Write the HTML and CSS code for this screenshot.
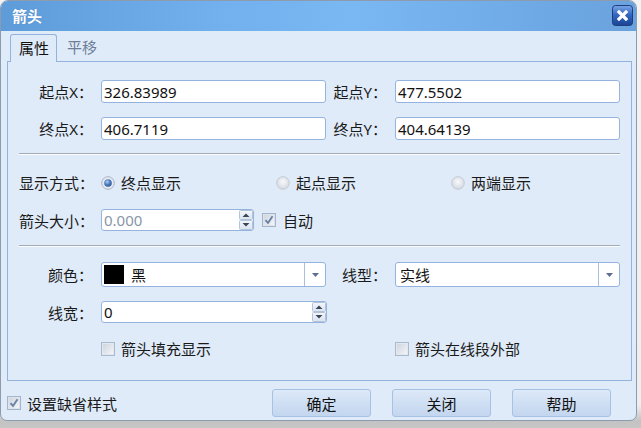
FILE: index.html
```html
<!DOCTYPE html>
<html>
<head>
<meta charset="utf-8">
<title>箭头</title>
<link rel="stylesheet" href="styles.css">
</head>
<body>
<svg class="defs" width="0" height="0">
  <defs>
    <linearGradient id="closeg" x1="0" y1="0" x2="0" y2="1">
      <stop offset="0" stop-color="#7aa6e6"/>
      <stop offset="0.45" stop-color="#3668c2"/>
      <stop offset="1" stop-color="#1a4392"/>
    </linearGradient>
    <radialGradient id="dotg" cx="0.4" cy="0.35" r="0.7">
      <stop offset="0" stop-color="#b4d0f2"/>
      <stop offset="0.5" stop-color="#4f80c4"/>
      <stop offset="1" stop-color="#24528f"/>
    </radialGradient>
    <radialGradient id="ringg" cx="0.5" cy="0.4" r="0.6">
      <stop offset="0" stop-color="#f8f9fb"/>
      <stop offset="1" stop-color="#d2d8e0"/>
    </radialGradient>
    <linearGradient id="boxg" x1="0" y1="0" x2="1" y2="1">
      <stop offset="0" stop-color="#cfd6df"/>
      <stop offset="1" stop-color="#f3f5f8"/>
    </linearGradient>
    <linearGradient id="spg" x1="0" y1="0" x2="0" y2="1">
      <stop offset="0" stop-color="#f4f7fb"/>
      <stop offset="1" stop-color="#d9e3ef"/>
    </linearGradient>
  </defs>
</svg>
<div class="window">
  <div class="titlebar">
    <span class="title">箭头</span>
    <svg class="close" width="21" height="21" viewBox="0 0 21 21">
      <rect x="0.5" y="0.5" width="20" height="20" rx="3" fill="url(#closeg)" stroke="#1c3d7e"/>
      <path d="M7 7 L14 14 M14 7 L7 14" stroke="#fff" stroke-width="3.2" stroke-linecap="square"/>
    </svg>
  </div>
  <div class="client">
    <div class="tabs">
      <div class="tab active">属性</div>
      <div class="tab">平移</div>
    </div>
    <div class="panel">
      <div class="row r1">
        <span class="lbl">起点X：</span>
        <div class="field">326.83989</div>
        <span class="lbl2">起点Y：</span>
        <div class="field">477.5502</div>
      </div>
      <div class="row r2">
        <span class="lbl">终点X：</span>
        <div class="field">406.7119</div>
        <span class="lbl2">终点Y：</span>
        <div class="field">404.64139</div>
      </div>
      <div class="sep s1"></div>
      <div class="row r3">
        <span class="lbl">显示方式：</span>
        <label class="opt">
          <svg width="14" height="14" viewBox="0 0 14 14"><circle cx="7" cy="7" r="6.3" fill="#e6eaf0" stroke="#a7b3c4"/><circle cx="7" cy="7" r="3.8" fill="url(#dotg)"/></svg>
          <span>终点显示</span>
        </label>
        <label class="opt">
          <svg width="14" height="14" viewBox="0 0 14 14"><circle cx="7" cy="7" r="6.3" fill="url(#ringg)" stroke="#c2c9d3"/></svg>
          <span>起点显示</span>
        </label>
        <label class="opt">
          <svg width="14" height="14" viewBox="0 0 14 14"><circle cx="7" cy="7" r="6.3" fill="url(#ringg)" stroke="#c2c9d3"/></svg>
          <span>两端显示</span>
        </label>
      </div>
      <div class="row r4">
        <span class="lbl">箭头大小：</span>
        <div class="spin small">
          <span class="val disabled">0.000</span>
          <svg class="arr" width="14" height="20" viewBox="0 0 14 20">
            <rect x="0.5" y="0.5" width="13" height="9" rx="1" fill="url(#spg)" stroke="#b3c4da"/>
            <rect x="0.5" y="10.5" width="13" height="9" rx="1" fill="url(#spg)" stroke="#b3c4da"/>
            <path d="M3.5 7 L7 3.5 L10.5 7 Z" fill="#3a475a"/>
            <path d="M3.5 13 L7 16.5 L10.5 13 Z" fill="#3a475a"/>
          </svg>
        </div>
        <label class="chk auto">
          <svg width="14" height="14" viewBox="0 0 14 14"><rect x="0.5" y="0.5" width="13" height="13" fill="#dde3ea" stroke="#a3b5cc"/><rect x="2" y="2" width="10" height="10" fill="url(#boxg)"/><path d="M3.5 7.2 L6 10 L10.5 3.2" stroke="#6b83a6" stroke-width="1.9" fill="none"/></svg>
          <span>自动</span>
        </label>
      </div>
      <div class="sep s2"></div>
      <div class="row r5">
        <span class="lbl">颜色：</span>
        <div class="field combo">
          <span class="swatch"></span>
          <span class="val">黑</span>
          <span class="dd"><svg width="7" height="4" viewBox="0 0 7 4"><path d="M0 0 L7 0 L3.5 4 Z" fill="#5a6f92"/></svg></span>
        </div>
        <span class="lbl2">线型：</span>
        <div class="field combo">
          <span class="val">实线</span>
          <span class="dd"><svg width="7" height="4" viewBox="0 0 7 4"><path d="M0 0 L7 0 L3.5 4 Z" fill="#5a6f92"/></svg></span>
        </div>
      </div>
      <div class="row r6">
        <span class="lbl">线宽：</span>
        <div class="spin wide">
          <span class="val">0</span>
          <svg class="arr" width="14" height="20" viewBox="0 0 14 20">
            <rect x="0.5" y="0.5" width="13" height="9" rx="1" fill="url(#spg)" stroke="#b3c4da"/>
            <rect x="0.5" y="10.5" width="13" height="9" rx="1" fill="url(#spg)" stroke="#b3c4da"/>
            <path d="M3.5 7 L7 3.5 L10.5 7 Z" fill="#3a475a"/>
            <path d="M3.5 13 L7 16.5 L10.5 13 Z" fill="#3a475a"/>
          </svg>
        </div>
      </div>
      <div class="row r7">
        <span class="indent"></span>
        <label class="chk c1">
          <svg width="14" height="14" viewBox="0 0 14 14"><rect x="0.5" y="0.5" width="13" height="13" fill="#e4e8ee" stroke="#a9b9ce"/><rect x="2" y="2" width="10" height="10" fill="url(#boxg)"/></svg>
          <span>箭头填充显示</span>
        </label>
        <label class="chk">
          <svg width="14" height="14" viewBox="0 0 14 14"><rect x="0.5" y="0.5" width="13" height="13" fill="#e4e8ee" stroke="#a9b9ce"/><rect x="2" y="2" width="10" height="10" fill="url(#boxg)"/></svg>
          <span>箭头在线段外部</span>
        </label>
      </div>
    </div>
    <div class="footer">
      <label class="chk def">
        <svg width="14" height="14" viewBox="0 0 14 14"><rect x="0.5" y="0.5" width="13" height="13" fill="#dde3ea" stroke="#a3b5cc"/><rect x="2" y="2" width="10" height="10" fill="url(#boxg)"/><path d="M3.5 7.2 L6 10 L10.5 3.2" stroke="#6b83a6" stroke-width="1.9" fill="none"/></svg>
        <span>设置缺省样式</span>
      </label>
      <div class="btns">
        <div class="btn">确定</div>
        <div class="btn">关闭</div>
        <div class="btn">帮助</div>
      </div>
    </div>
  </div>
</div>
</body>
</html>
```

FILE: styles.css
```css
html, body {
  margin: 0;
  padding: 0;
}
body {
  width: 641px;
  height: 428px;
  overflow: hidden;
  background: linear-gradient(to bottom, #f3f3f3 0px, #eeeeee 405px, #c3c3c3 421px, #c6c6c6 428px);
  font-family: "Noto Sans", "Noto Sans CJK SC", sans-serif;
  font-size: 15px;
  color: #1a1a1a;
}
.defs {
  display: block;
  width: 0;
  height: 0;
  overflow: hidden;
}
.window {
  width: 637px;
  height: 421px;
  box-sizing: border-box;
  border: 1px solid #8e9bad;
  border-radius: 8px 8px 7px 7px;
  background: #e0ebf9;
  overflow: hidden;
  display: flex;
  flex-direction: column;
}
.titlebar {
  height: 30px;
  flex: none;
  box-sizing: border-box;
  display: flex;
  justify-content: space-between;
  align-items: flex-start;
  padding: 4px 3px 0 11px;
  background: linear-gradient(to right, #5d9bd9 0%, #72b0ee 35%, #7ab8f3 55%, #6ea9e5 85%, #6aa2dd 100%);
}
.title {
  color: #fff;
  font-weight: bold;
  line-height: 22px;
  text-shadow: 0 0 1px rgba(30, 60, 110, 0.35);
}
.close {
  display: block;
}
.client {
  flex: 1;
  display: flex;
  flex-direction: column;
  padding: 0 4px 0 6px;
}
.tabs {
  display: flex;
  height: 27px;
  margin-top: 3px;
  flex: none;
}
.tab {
  height: 28px;
  box-sizing: border-box;
  line-height: 26px;
  padding: 0 10px;
  color: #6e7e97;
}
.tab.active {
  margin-left: 3px;
  border: 1px solid #93b2dc;
  border-bottom: none;
  border-radius: 3px 3px 0 0;
  background: #e0ebf9;
  color: #111;
  padding: 0 7px 0 8px;
  position: relative;
  z-index: 1;
}
.panel {
  height: 320px;
  flex: none;
  box-sizing: border-box;
  border: 1px solid #93b2dc;
  display: flex;
  flex-direction: column;
  padding: 0 11px;
}
.row {
  display: flex;
  align-items: center;
  flex: none;
}
.r1 { margin-top: 18px; height: 23px; }
.r2 { margin-top: 14px; height: 23px; }
.s1 { margin-top: 13px; }
.r3 { margin-top: 16px; height: 23px; }
.r4 { margin-top: 15px; height: 22px; }
.s2 { margin-top: 14px; }
.r5 { margin-top: 15px; height: 25px; }
.r6 { margin-top: 14px; height: 22px; }
.r7 { margin-top: 14px; height: 23px; }
.sep {
  height: 0;
  flex: none;
  border-top: 1px solid #a4abb6;
  border-bottom: 1px solid #fbfdff;
}
.lbl {
  width: 74px;
  flex: none;
  text-align: right;
  margin-right: 8px;
  white-space: nowrap;
}
.lbl2 {
  width: 61px;
  flex: none;
  text-align: right;
  margin-right: 8px;
  white-space: nowrap;
}
.field {
  width: 225px;
  height: 23px;
  flex: none;
  box-sizing: border-box;
  border: 1px solid #94b3de;
  border-radius: 3px;
  background: #fff;
  padding: 0 2px;
  display: flex;
  align-items: center;
  color: #111;
}
.combo {
  height: 25px;
  padding: 0 0 0 2px;
}
.combo .val {
  flex: 1;
  padding-left: 2px;
}
.swatch {
  width: 20px;
  height: 19px;
  background: #000;
  flex: none;
  margin-right: 5px;
}
.dd {
  width: 20px;
  height: 100%;
  flex: none;
  border-left: 1px solid #a9c0df;
  display: flex;
  align-items: center;
  justify-content: center;
}
.dd svg {
  display: block;
}
.spin {
  height: 22px;
  box-sizing: border-box;
  border: 1px solid #94b3de;
  border-radius: 3px;
  background: #fff;
  display: flex;
  align-items: center;
  padding-left: 2px;
  flex: none;
}
.spin.small { width: 153px; }
.spin.wide { width: 226px; }
.spin .val {
  flex: 1;
  color: #111;
}
.spin .val.disabled {
  color: #8896a8;
}
.arr {
  display: block;
  flex: none;
}
.opt {
  width: 175px;
  flex: none;
  display: flex;
  align-items: center;
  gap: 6px;
}
.opt svg, .chk svg {
  display: block;
  flex: none;
}
.chk {
  display: flex;
  align-items: center;
  gap: 6px;
  flex: none;
}
.chk.auto {
  margin-left: 8px;
  gap: 7px;
}
.indent {
  width: 82px;
  flex: none;
}
.chk.c1 {
  width: 294px;
}
.footer {
  flex: 1;
  display: flex;
  align-items: center;
  padding: 5px 21px 0 0;
}
.btns {
  margin-left: auto;
  display: flex;
  gap: 21px;
}
.btn {
  width: 99px;
  height: 28px;
  box-sizing: border-box;
  border: 1px solid #a7c1e5;
  border-radius: 3px;
  background: linear-gradient(to bottom, #dde9f8 0%, #cfdff3 50%, #c3d6ef 100%);
  display: flex;
  align-items: center;
  justify-content: center;
  color: #111;
}
```
